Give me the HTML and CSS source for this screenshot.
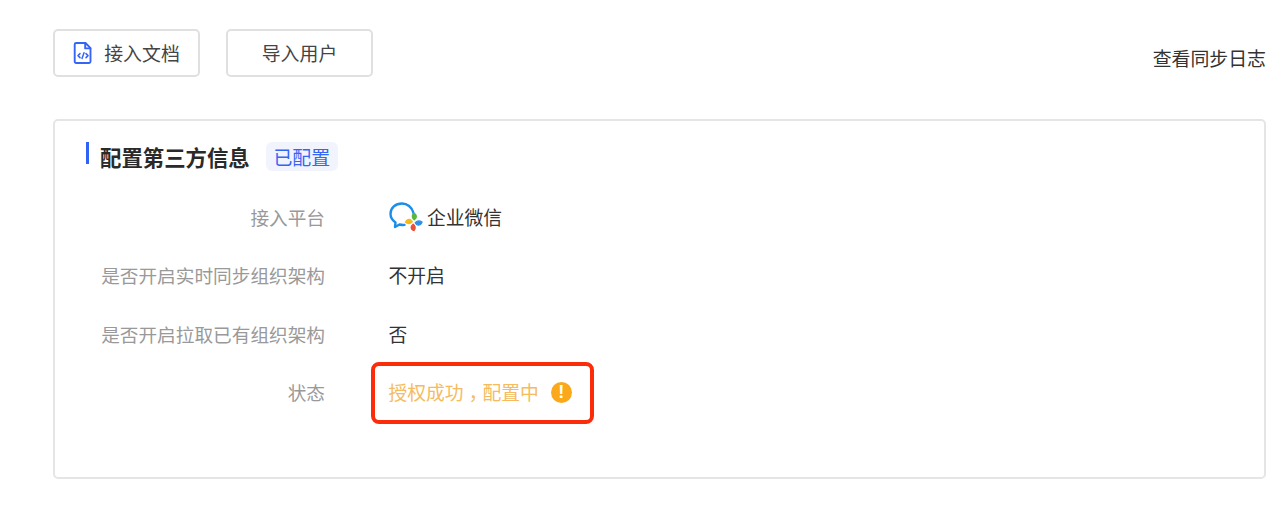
FILE: index.html
```html
<!DOCTYPE html>
<html lang="zh-CN">
<head>
<meta charset="utf-8">
<title>配置第三方信息</title>
<link rel="stylesheet" href="styles.css">
</head>
<body>
<header class="toolbar">
  <div class="actions">
    <button class="btn" type="button">
      <svg class="doc-icon" width="20" height="24" viewBox="0 0 20 24" fill="none" stroke="#3565f2" stroke-width="1.9" stroke-linejoin="round" stroke-linecap="round">
        <path d="M3.2 2h9.3l5 5.2v13.3a1.5 1.5 0 0 1-1.5 1.5H3.2a1.5 1.5 0 0 1-1.5-1.5V3.5A1.5 1.5 0 0 1 3.2 2z"/>
        <path d="M12.2 2.2v5.2h5.2" />
        <path d="M7 12.6l-2 2 2 2M13 12.6l2 2-2 2M11 11.8l-2 5.6" stroke-width="1.5"/>
      </svg>
      <span>接入文档</span>
    </button>
    <button class="btn" type="button"><span>导入用户</span></button>
  </div>
  <a class="log-link">查看同步日志</a>
</header>
<section class="card">
  <div class="card-head">
    <i class="bar"></i>
    <h2 class="title">配置第三方信息</h2>
    <span class="tag">已配置</span>
  </div>
  <dl class="rows">
    <div class="row">
      <dt class="label">接入平台</dt>
      <dd class="value platform">
        <svg class="wecom" width="34" height="30" viewBox="0 0 34 30" fill="none">
          <path d="M24.5 11C23 5 18 1.5 13 1.5 6.500 1.500 1.500 6 1.500 11.800c0 3.500 2 6.700 5 8.700L6 25l4.500-2.500c1.500.4 3.500.6 5 .4" stroke="#1a8ee8" stroke-width="2.400" stroke-linecap="round" stroke-linejoin="round"/>
          <path d="M24.500 11.500c2.200.2 3.400 2.400 2.400 4.600l-1.700 1.700c-1.900-1.500-2.600-4-.7-6.300z" fill="#57b83c" stroke="#57b83c" stroke-width="1.400" stroke-linejoin="round"/>
          <path d="M16.500 20.500c.6-2.400 3-3.500 5.200-2.600l1.500 1.800c-1.600 1.800-4.200 2.200-6.700.8z" fill="#f7b916" stroke="#f7b916" stroke-width="1.400" stroke-linejoin="round"/>
          <path d="M33 20c-.6 2.400-3 3.500-5.200 2.600l-1.500-1.800c1.600-1.800 4.200-2.200 6.700-.8z" fill="#2f8fe8" stroke="#2f8fe8" stroke-width="1.400" stroke-linejoin="round"/>
          <path d="M25 28.500c-2.200-.2-3.400-2.400-2.400-4.600l1.700-1.700c1.900 1.500 2.600 4 .7 6.300z" fill="#e9503a" stroke="#e9503a" stroke-width="1.400" stroke-linejoin="round"/>
        </svg>
        <span>企业微信</span>
      </dd>
    </div>
    <div class="row">
      <dt class="label">是否开启实时同步组织架构</dt>
      <dd class="value">不开启</dd>
    </div>
    <div class="row">
      <dt class="label">是否开启拉取已有组织架构</dt>
      <dd class="value">否</dd>
    </div>
    <div class="row">
      <dt class="label">状态</dt>
      <dd class="value status">
        <span>授权成功<span class="comma">，</span>配置中</span>
        <span class="warn">!</span>
        <i class="highlight"></i>
      </dd>
    </div>
  </dl>
</section>
</body>
</html>
```

FILE: styles.css
```css
* { box-sizing: border-box; }
html, body { margin: 0; padding: 0; background: #fff; }
body {
  width: 1280px;
  height: 524px;
  overflow: hidden;
  padding: 29px 14px 0 53px;
  font-family: "Noto Sans CJK SC", "Liberation Sans", sans-serif;
  font-size: 18.67px;
  color: #333;
}
.toolbar {
  display: flex;
  justify-content: space-between;
  height: 90px;
}
.actions { display: flex; gap: 26px; align-items: flex-start; }
.btn {
  width: 147px;
  height: 48px;
  display: flex;
  align-items: center;
  justify-content: center;
  gap: 11px;
  padding: 0;
  background: #fff;
  border: 2px solid #e0e0e0;
  border-radius: 5px;
  font: inherit;
  font-size: 18.9px;
  color: #444;
  line-height: 1;
}
.doc-icon { display: block; }
.log-link { margin-top: 14px; line-height: 30px; color: #333; font-size: 18.9px; }
.card {
  width: 1213px;
  height: 360px;
  border: 2px solid #e5e5e5;
  border-radius: 5px;
  padding: 21px 0 0 31px;
}
.card-head { display: flex; align-items: flex-start; height: 39px; }
.bar { width: 3px; height: 22px; background: #2f62f5; flex: none; }
.title {
  margin: 0 16px 0 11px;
  font-size: 21.4px;
  font-weight: 700;
  line-height: 30px;
  color: #2a2a2a;
}
.tag {
  width: 72px;
  height: 29px;
  background: #f1f4fd;
  border-radius: 6px;
  color: #3565f2;
  text-align: center;
  line-height: 29px;
  font-size: 18.9px;
}
.rows { margin: 7px 0 0 0; }
.row { display: flex; align-items: center; height: 58.3px; }
.label { width: 239px; text-align: right; color: #999; line-height: 30px; }
.value { margin: 0 0 0 63.500px; color: #333; line-height: 30px; display: flex; align-items: center; font-size: 18.8px; }
.platform { gap: 4px; margin-left: 64px; }
.wecom { display: block; }
.status { position: relative; color: #f5bb5e; gap: 12px; }
.comma { padding-left: 5px; letter-spacing: -5px; }
.warn {
  width: 21px;
  height: 21px;
  border-radius: 50%;
  background: #fba91b;
  color: #fff;
  font-family: "Liberation Sans", sans-serif;
  font-weight: 700;
  font-size: 18px;
  line-height: 21px;
  text-align: center;
}
.highlight {
  position: absolute;
  left: -17.500px;
  top: -15px;
  width: 223px;
  height: 62px;
  border: 4px solid #fb2c0a;
  border-radius: 8px;
}
```
